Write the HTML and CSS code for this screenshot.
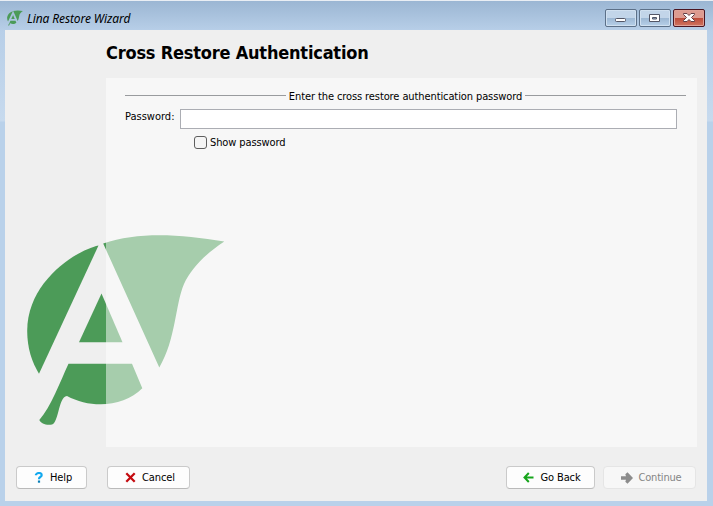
FILE: index.html
```html
<!DOCTYPE html>
<html lang="en">
<head>
<meta charset="utf-8">
<title>Lina Restore Wizard</title>
<link rel="stylesheet" href="styles.css">
</head>
<body>
<div class="window">
  <header class="titlebar">
    <svg class="app-icon" width="16" height="16" viewBox="26 234 199 192"><use href="#leaf"/></svg>
    <span class="caption">Lina Restore Wizard</span>
    <div class="controls">
      <span class="control"><svg width="30" height="16" viewBox="0 0 30 16"><rect x="9.500" y="8.500" width="10" height="3" rx="1" fill="#fff" stroke="#535666"/></svg></span>
      <span class="control"><svg width="30" height="16" viewBox="0 0 30 16"><path d="M9.500 4.500h10v7h-10zM12.500 7.500v1.500h4v-1.500z" fill="#fff" fill-rule="evenodd" stroke="#535666"/></svg></span>
      <span class="control close"><svg width="30" height="16" viewBox="0 0 30 16"><path d="M9.500 3.500h3.500l2 2 2-2h3.500v1L17.500 7.500l3 3v1H17l-2-2-2 2H9.500v-1l3-3-3-3z" fill="#fff" stroke="#634047"/></svg></span>
    </div>
  </header>
  <main class="client">
    <svg class="watermark" width="199" height="192" viewBox="26 234 199 192">
      <g id="leaf" fill="#4c9b58">
        <path d="M98.500 245.500C77 250 27 281 27.200 331C27.300 349 32 362 39 373.800Z"/>
        <path d="M101.500 293.500L79 342.300H122.500Z"/>
        <path d="M103.200 243.500C138 231.500 180 234 224.300 241.500C204 255 191 269 184 284C175 305 176 339 159.300 367.500Z"/>
        <path d="M68.500 363.800H132L142.300 388.300C124 407 91 409 67 396C62 397 61 403 59 409C57 417 55 424 52 424.500C46 425.500 41 423.500 39.300 420C51 407 60 382 68.500 363.800Z"/>
      </g>
    </svg>
    <h1 class="heading">Cross Restore Authentication</h1>
    <section class="panel">
      <div class="divider"><span>Enter the cross restore authentication password</span></div>
      <div class="field">
        <label for="password">Password:</label>
        <input id="password" type="password">
      </div>
      <label class="show"><input type="checkbox"><span>Show password</span></label>
    </section>
    <footer class="actions">
      <button class="button help"><svg width="10" height="11" viewBox="0 0 10 11"><path d="M2 3.200V2.500Q3 1 5 1Q7.700 1 7.700 3Q7.700 4.300 6.300 5Q5 5.700 5 7.200" fill="none" stroke="#12a8ee" stroke-width="2.200"/><path d="M3.900 8.500h2.200v2.200H3.900z" fill="#087fb8"/></svg><span>Help</span></button>
      <button class="button cancel"><svg width="11" height="11" viewBox="0 0 11 11"><path d="M1.300 1.300L9.700 9.700M9.700 1.300L1.300 9.700" stroke="#c40b10" stroke-width="2.300"/></svg><span>Cancel</span></button>
      <button class="button back"><svg width="11" height="11" viewBox="0 0 11 11"><path d="M10.500 5.500H2M5.800 1L1.500 5.500L5.800 10" fill="none" stroke="#17a51c" stroke-width="2"/></svg><span>Go Back</span></button>
      <button class="button continue" disabled><svg width="12" height="12" viewBox="0 0 12 12"><path d="M0 4.300H5L4.300 2.200L6.500 .200L12 6L6.500 11.800L4.300 9.800L5 7.700H0Z" fill="#8c8c8c"/></svg><span>Continue</span></button>
    </footer>
  </main>
</div>
</body>
</html>
```
FILE: styles.css
```css
* { box-sizing: border-box; }
body {
  margin: 0;
  font: 11px/14px "DejaVu Sans Condensed", "DejaVu Sans", sans-serif;
  font-stretch: condensed;
  letter-spacing: -.1px;
  color: #000;
}
.window {
  width: 713px;
  height: 506px;
  padding: 0 6px 5px 5px;
  border-top: 1px solid #e9eef4;
  background: linear-gradient(#9bb6d3 0, #b8cfe8 30px, #c7daee 120px, #b9d1ea 121px);
}
.titlebar {
  height: 29px;
  display: flex;
  align-items: flex-start;
  padding-left: 2px;
}
.app-icon { margin-top: 9px; }
.caption {
  margin: 9px 0 0 4px;
  font: italic 12px/18px "Noto Sans", sans-serif;
}
.controls {
  margin: 8px 2px 0 auto;
  display: flex;
  gap: 2px;
}
.control {
  width: 32px;
  height: 18px;
  border: 1px solid #5c7088;
  border-radius: 2px;
  background: linear-gradient(#c2d5e9 48%, #9cb7d3 50%, #b7d0e9);
  box-shadow: inset 0 0 0 1px #d0e0f0;
}
.control svg { display: block; }
.close {
  border-color: #4b1621;
  background: linear-gradient(#dd9b90 48%, #bd4a38 50%, #d07561);
  box-shadow: inset 0 0 0 1px #dfa197;
}
.client {
  position: relative;
  height: 471px;
  padding: 0 10px 0 11px;
  background: #efefef;
}
.watermark {
  position: absolute;
  left: 21px;
  top: 204px;
}
.heading {
  height: 48px;
  margin: 0 0 0 90px;
  padding-top: 12px;
  font: bold 18px/22px "DejaVu Sans Condensed", sans-serif;
  font-stretch: condensed;
  letter-spacing: -.2px;
  white-space: nowrap;
}
.panel {
  position: relative;
  height: 369px;
  margin-left: 90px;
  padding: 11px 11px 0 19px;
  background: rgba(255, 255, 255, .5);
}
.divider {
  display: flex;
  align-items: center;
  height: 14px;
  gap: 3px;
  white-space: nowrap;
}
.divider span { padding-top: 1px; }
.divider::before, .divider::after {
  content: "";
  flex: 1;
  height: 1px;
  margin-top: -1px;
  background: #999b9e;
}
.field {
  display: flex;
  justify-content: space-between;
  margin: 6px 9px 0 0;
}
.field label {
  padding-top: 1px;
  letter-spacing: 0;
}
.field input {
  width: 497px;
  height: 20px;
  border: 1px solid #abadb3;
  background: #fff;
  outline: 0;
}
.show {
  display: flex;
  align-items: center;
  gap: 3px;
  height: 14px;
  margin: 6px 0 0 69px;
}
.show span { padding-top: 2px; }
.show input {
  appearance: none;
  width: 13px;
  height: 13px;
  margin: 0;
  border: 1px solid #5e5e5e;
  border-radius: 3px;
  background: #f5f5f5;
}
.actions {
  display: flex;
  margin-top: 19px;
}
.button {
  display: flex;
  align-items: center;
  justify-content: center;
  gap: 6px;
  height: 23px;
  padding: 0 0 0 3px;
  border: 1px solid #cacaca;
  border-bottom-color: #bababa;
  border-radius: 4px;
  background: #fdfdfd;
  color: #000;
  font: inherit;
  letter-spacing: -.1px;
}
.button span { padding-top: 1px; }
.help { width: 71px; }
.cancel { width: 83px; margin-left: 20px; }
.back { width: 89px; margin-left: auto; }
.continue {
  width: 93px;
  margin: 0 1px 0 8px;
  border-color: #e5e5e5;
  background: #f7f7f7;
  color: #858585;
  letter-spacing: -.2px;
}
```
